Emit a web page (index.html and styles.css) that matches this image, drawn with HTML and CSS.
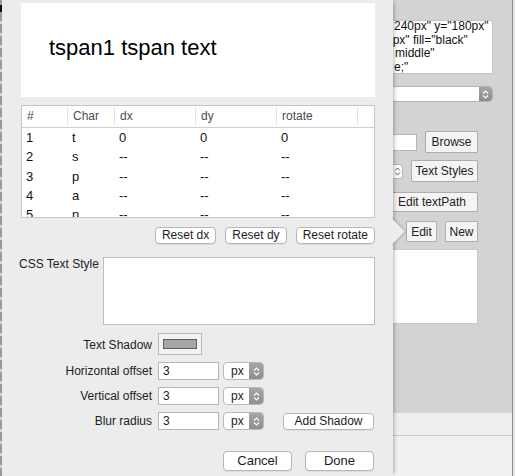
FILE: index.html
```html
<!DOCTYPE html>
<html lang="en">
<head>
    <meta charset="UTF-8">
    <title>tspan editor</title>
    <link rel="stylesheet" href="styles.css">
</head>
<body>
<div class="desk">
    <div class="edge"></div>

    <!-- window behind the sheet -->
    <div class="window">
        <div class="window-main">
            <div class="side">
                <div class="code">
                    <div class="l1">240px" y="180px"</div>
                    <div class="l2">0px" fill="black"</div>
                    <div class="l3">middle"</div>
                    <div class="l4">e;"</div>
                </div>
                <div class="popup">
                    <span class="arrows">
                        <svg width="7" height="11" viewBox="0 0 7 11"><path d="M1 4.5 L3.5 2 L6 4.5 M1 6.5 L3.5 9 L6 6.5" fill="none" stroke="#fff" stroke-width="1.2"/></svg>
                    </span>
                </div>
                <div class="srow browse">
                    <span class="field"></span>
                    <span class="old-btn w-browse">Browse</span>
                </div>
                <div class="srow styles">
                    <span class="mini-stepper">
                        <svg width="7" height="11" viewBox="0 0 7 11"><path d="M1 4.5 L3.5 2 L6 4.5 M1 6.5 L3.5 9 L6 6.5" fill="none" stroke="#555" stroke-width="1"/></svg>
                    </span>
                    <span class="old-btn w-styles">Text Styles</span>
                </div>
                <div class="srow path">
                    <span class="old-btn w-path">Edit textPath</span>
                </div>
                <div class="srow edit">
                    <span class="old-btn w-edit">Edit</span>
                    <span class="old-btn w-new">New</span>
                </div>
                <div class="blank"></div>
            </div>
        </div>
        <div class="window-bar"></div>
        <div class="window-foot"></div>
    </div>

    <!-- the sheet -->
    <div class="sheet">
        <div class="preview">tspan1 tspan text</div>

        <div class="chars">
            <div class="chars-head">
                <span>#</span><span>Char</span><span>dx</span><span>dy</span><span>rotate</span><span class="last"></span>
            </div>
            <div class="chars-row"><span>1</span><span>t</span><span>0</span><span>0</span><span>0</span><span></span></div>
            <div class="chars-row"><span>2</span><span>s</span><span>--</span><span>--</span><span>--</span><span></span></div>
            <div class="chars-row"><span>3</span><span>p</span><span>--</span><span>--</span><span>--</span><span></span></div>
            <div class="chars-row"><span>4</span><span>a</span><span>--</span><span>--</span><span>--</span><span></span></div>
            <div class="chars-row"><span>5</span><span>n</span><span>--</span><span>--</span><span>--</span><span></span></div>
        </div>

        <div class="resets">
            <button class="btn">Reset dx</button>
            <button class="btn">Reset dy</button>
            <button class="btn">Reset rotate</button>
        </div>

        <div class="css-row">
            <label class="css-label">CSS Text Style</label>
            <div class="css-box"></div>
        </div>

        <div class="shadow-row">
            <label class="form-label">Text Shadow</label>
            <div class="well"><div class="swatch"></div></div>
        </div>

        <div class="unit-row">
            <label class="form-label">Horizontal offset</label>
            <div class="input">3</div>
            <div class="unit">
                <span class="unit-text">px</span>
                <span class="unit-arrows">
                    <svg width="7" height="11" viewBox="0 0 7 11"><path d="M1 4.5 L3.5 2 L6 4.5 M1 6.5 L3.5 9 L6 6.5" fill="none" stroke="#fff" stroke-width="1.2"/></svg>
                </span>
            </div>
        </div>
        <div class="unit-row">
            <label class="form-label">Vertical offset</label>
            <div class="input">3</div>
            <div class="unit">
                <span class="unit-text">px</span>
                <span class="unit-arrows">
                    <svg width="7" height="11" viewBox="0 0 7 11"><path d="M1 4.5 L3.5 2 L6 4.5 M1 6.5 L3.5 9 L6 6.5" fill="none" stroke="#fff" stroke-width="1.2"/></svg>
                </span>
            </div>
        </div>
        <div class="unit-row">
            <label class="form-label">Blur radius</label>
            <div class="input">3</div>
            <div class="unit">
                <span class="unit-text">px</span>
                <span class="unit-arrows">
                    <svg width="7" height="11" viewBox="0 0 7 11"><path d="M1 4.5 L3.5 2 L6 4.5 M1 6.5 L3.5 9 L6 6.5" fill="none" stroke="#fff" stroke-width="1.2"/></svg>
                </span>
            </div>
            <button class="btn add">Add Shadow</button>
        </div>

        <div class="footer">
            <button class="btn big">Cancel</button>
            <button class="btn big">Done</button>
        </div>
    </div>
</div>
</body>
</html>
```

FILE: styles.css
```css
* {
    box-sizing: border-box;
}
body {
    margin: 0;
    width: 515px;
    height: 476px;
    overflow: hidden;
    background: #e4e4e4;
    font-family: "Liberation Sans", Arial, sans-serif;
    font-size: 12px;
    color: #1d1d1d;
}
.desk {
    position: relative;
    display: flex;
    width: 515px;
    height: 476px;
}
.edge {
    width: 2px;
    background:
        linear-gradient(#111, #111) 0 5px / 2px 7px no-repeat,
        repeating-linear-gradient(to bottom, #9a9a9a 0 9px, #d2d2d2 9px 12px);
}

/* window behind */
.window {
    width: 511px;
    display: flex;
    flex-direction: column;
    border-right: 1px solid #8c8c8c;
}
.window-main {
    height: 413px;
    background: #d3d3d3;
    padding: 20px 0 0 388px;
}
.window-bar {
    height: 23px;
    background: #efefef;
    border-bottom: 1px solid #c9c9c9;
}
.window-foot {
    flex: 1;
    background: #f1f1f1;
}
.side {
    width: 103px;
    display: flex;
    flex-direction: column;
}
.code {
    height: 54px;
    background: #fff;
    border: 1px solid #c4c4c4;
    overflow: hidden;
    line-height: 13.7px;
    white-space: nowrap;
    color: #111;
}
.code .l1 { padding-left: 3px; margin-top: -1px; }
.code .l2 { text-indent: -5px; }
.code .l3 { padding-left: 4px; }
.code .l4 { padding-left: 3px; }
.popup {
    margin-top: 12px;
    height: 16px;
    background: #fff;
    border: 1px solid #b3b3b3;
    border-radius: 4px;
    display: flex;
    justify-content: flex-end;
    overflow: hidden;
}
.arrows {
    width: 13px;
    background: linear-gradient(#a6a6a6, #8e8e8e);
    display: flex;
    align-items: center;
    justify-content: center;
}
.srow {
    display: flex;
    align-items: center;
    width: 88px;
}
.srow.browse {
    margin-top: 29px;
    height: 22px;
    justify-content: space-between;
}
.srow.styles {
    margin-top: 7px;
    height: 22px;
    justify-content: space-between;
}
.srow.path {
    margin-top: 10px;
    height: 20px;
}
.srow.edit {
    margin-top: 9px;
    height: 21px;
    justify-content: flex-end;
    gap: 8px;
}
.field {
    width: 27px;
    height: 17px;
    background: #fff;
    border: 1px solid #b5b5b5;
}
.mini-stepper {
    width: 13px;
    height: 15px;
    background: #fff;
    border: 1px solid #b5b5b5;
    border-radius: 4px;
    display: flex;
    align-items: center;
    justify-content: flex-end;
    padding-right: 1px;
}
.old-btn {
    height: 100%;
    background: #f4f4f4;
    border: 1px solid #adadad;
    border-radius: 1px;
    color: #222;
    display: flex;
    align-items: center;
    justify-content: center;
    white-space: nowrap;
}
.w-browse { width: 53px; }
.w-styles { width: 67px; }
.w-path { width: 92px; margin-left: -4px; }
.w-edit { width: 31px; }
.w-new { width: 33px; }
.blank {
    margin-top: 7px;
    width: 88px;
    height: 75px;
    background: #fff;
    border: 1px solid #cacaca;
}

/* sheet */
.sheet {
    position: absolute;
    left: 2px;
    top: 0;
    width: 391px;
    height: 476px;
    background: #ececec;
    padding: 3px 18px 0 19px;
    box-shadow: 3px 0 4px -2px rgba(0, 0, 0, 0.3);
    display: flex;
    flex-direction: column;
}
.sheet::after {
    content: "";
    position: absolute;
    left: 380px;
    top: 222px;
    width: 19px;
    height: 19px;
    background: #ececec;
    transform: rotate(45deg);
    box-shadow: 1px -1px 2px rgba(0, 0, 0, 0.18);
}
.preview {
    height: 94px;
    flex: none;
    background: #fff;
    padding: 32px 0 0 28px;
    font-size: 22px;
    line-height: 26px;
    color: #000;
}
.chars {
    margin-top: 8px;
    height: 113px;
    flex: none;
    background: #fff;
    border: 1px solid #c6c6c6;
    overflow: hidden;
}
.chars-head,
.chars-row {
    display: grid;
    grid-template-columns: 46px 47px 81px 81px 81px 1fr;
}
.chars-head {
    height: 22px;
    border-bottom: 1px solid #d2d2d2;
    color: #4d4d4d;
    line-height: 21px;
}
.chars-head span {
    padding-left: 5px;
    background: linear-gradient(#e2e2e2, #e2e2e2) right 2px / 1px 17px no-repeat;
}
.chars-head span.last {
    background: none;
}
.chars-row {
    height: 19.25px;
    line-height: 19px;
    font-size: 13px;
    color: #111;
}
.chars-row span {
    padding-left: 4px;
}
.btn {
    height: 17px;
    padding: 0 6px;
    background: #fff;
    border: 1px solid #b6b6b6;
    border-radius: 4px;
    box-shadow: 0 1px 0 rgba(0, 0, 0, 0.06);
    font-family: "Liberation Sans", Arial, sans-serif;
    font-size: 12px;
    line-height: 15px;
    color: #1d1d1d;
    white-space: nowrap;
}
.resets {
    margin-top: 9px;
    display: flex;
    justify-content: flex-end;
    gap: 9px;
}
.css-row {
    margin-top: 13px;
    display: flex;
}
.css-label {
    width: 84px;
    margin-left: -2px;
    line-height: 14px;
}
.css-box {
    width: 272px;
    height: 68px;
    background: #fff;
    border: 1px solid #bdbdbd;
}
.form-label {
    width: 131px;
    margin-right: 6px;
    text-align: right;
    white-space: nowrap;
}
.shadow-row {
    margin-top: 8px;
    height: 22px;
    display: flex;
    align-items: center;
}
.shadow-row .form-label {
    padding-top: 2px;
}
.well {
    width: 44px;
    height: 22px;
    padding: 5px 4px;
    background: #f3f3f3;
    border: 1px solid #b9b9b9;
}
.swatch {
    height: 100%;
    background: #a6a6a6;
    border: 1px solid #5f5f5f;
}
.unit-row {
    margin-top: 7px;
    height: 18px;
    display: flex;
    align-items: center;
}
.input {
    width: 61px;
    height: 18px;
    padding-left: 4px;
    background: #fff;
    border: 1px solid #b6b6b6;
    line-height: 16px;
}
.unit {
    margin-left: 4px;
    width: 41px;
    height: 18px;
    display: flex;
    background: #fff;
    border: 1px solid #b9b9b9;
    border-radius: 4px;
    overflow: hidden;
}
.unit-text {
    flex: 1;
    padding-left: 7px;
    line-height: 16px;
}
.unit-arrows {
    width: 14px;
    background: linear-gradient(#a6a6a6, #8e8e8e);
    display: flex;
    align-items: center;
    justify-content: center;
}
.btn.add {
    margin-left: 19px;
    width: 91px;
}
.footer {
    margin-top: 21px;
    padding-right: 1px;
    display: flex;
    justify-content: flex-end;
    gap: 13px;
}
.btn.big {
    width: 69px;
    height: 20px;
    font-size: 13px;
    line-height: 18px;
}
```
